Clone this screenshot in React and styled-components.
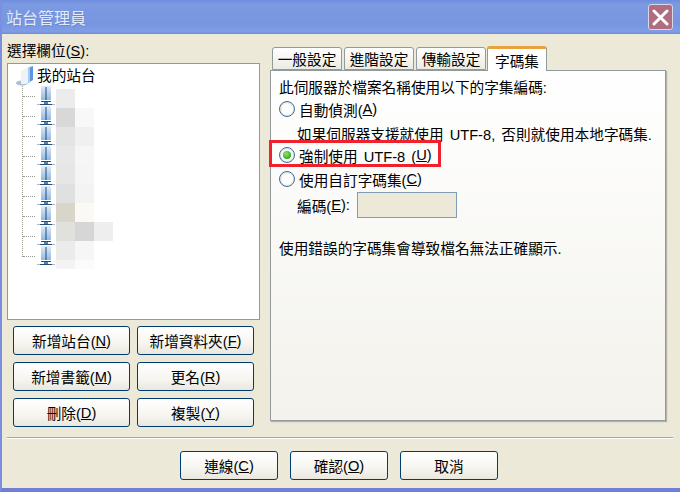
import styled, { createGlobalStyle } from "styled-components";

const Global = createGlobalStyle`
  html, body { margin: 0; padding: 0; background: #ece9d8; }
  body { font-family: "Liberation Sans", "Noto Sans CJK TC", sans-serif; font-size: 14.67px; color: #000; }
  u { text-underline-offset: 1px; }
`;

const Window = styled.div`
  width: 680px;
  height: 492px;
  box-sizing: border-box;
  display: flex;
  flex-direction: column;
  background: #ece9d8;
  border-left: 2px solid #7b8ee0;
  border-bottom: 4px solid #6f7fd6;
  overflow: hidden;
  position: relative;
`;

const TitleBar = styled.div`
  height: 34px;
  margin-left: -2px;
  flex: none;
  display: flex;
  align-items: center;
  justify-content: space-between;
  padding: 0 7px 0 6px;
  background: linear-gradient(#6e8cdc 0, #7c9ae2 12%, #7896e0 70%, #7f9ee6 92%, #6f8bdc 100%);
`;

const TitleText = styled.span`
  color: #e2ebfa;
  font-size: 16px;
  text-shadow: 1px 1px 0 #6a86d2;
`;

const CloseButton = styled.div`
  width: 25px;
  height: 26px;
  box-sizing: border-box;
  border: 1px solid #d8d8e8;
  border-radius: 3px;
  background: #b06c80;
  display: flex;
  align-items: center;
  justify-content: center;
`;

const Main = styled.div`
  display: flex;
  height: 387px;
  flex: none;
  padding-left: 5px;
`;

const LeftColumn = styled.div`
  width: 253px;
  flex: none;
  margin-right: 10px;
`;

const FieldLabel = styled.div`
  height: 29px;
  line-height: 34px;
`;

const Tree = styled.div`
  position: relative;
  box-sizing: border-box;
  height: 257px;
  padding: 1px 0 0 8px;
  background: #fff;
  border: 1px solid #7f9db9;
`;

const RootNode = styled.div`
  display: flex;
  align-items: center;
  gap: 3px;
  height: 21px;
`;

const RootLabel = styled.span`
  margin-bottom: 2px;
`;

const Branches = styled.div`
  position: relative;
  padding-left: 21px;
  &::before {
    content: "";
    position: absolute;
    left: 6px;
    top: 0;
    height: 171px;
    border-left: 1px dotted #9a9a90;
  }
`;

const ServerNode = styled.div`
  height: 20px;
  display: flex;
  align-items: center;
  position: relative;
  &::before {
    content: "";
    position: absolute;
    left: -14px;
    top: 10px;
    width: 12px;
    border-top: 1px dotted #9a9a90;
  }
`;

const Mosaic = styled.div`
  position: absolute;
  left: 48px;
  top: 25px;
`;

const MosaicRow = styled.div`
  display: flex;
  height: ${p => p.$h || 19}px;
`;

const MosaicCell = styled.div`
  width: 19px;
  background: ${p => p.$c};
`;

const ButtonGrid = styled.div`
  display: grid;
  grid-template-columns: 117px 117px;
  grid-auto-rows: 29px;
  gap: 7px;
  padding: 6px 0 0 6px;
`;

const Button = styled.div`
  box-sizing: border-box;
  border: 1px solid #003c74;
  border-radius: 3px;
  background: linear-gradient(#fff 0, #f6f5f0 60%, #e9e7dd 100%);
  display: flex;
  align-items: center;
  justify-content: center;
  width: ${p => p.$w ? `${p.$w}px` : "auto"};
  height: 29px;
`;

const RightColumn = styled.div`
  width: 396px;
  flex: none;
  padding-top: 12px;
`;

const TabStrip = styled.div`
  display: flex;
  align-items: flex-end;
  gap: 2px;
  height: 24px;
  padding-left: 2px;
  position: relative;
  z-index: 1;
`;

const Tab = styled.div`
  box-sizing: border-box;
  height: ${p => p.$active ? 25 : 23}px;
  width: ${p => p.$active ? 60 : 70}px;
  margin-left: ${p => p.$active ? -1 : 0}px;
  margin-bottom: ${p => p.$active ? -1 : 0}px;
  display: flex;
  align-items: center;
  justify-content: center;
  border: 1px solid #919b9c;
  border-bottom: ${p => p.$active ? "none" : "1px solid #919b9c"};
  border-top: ${p => p.$active ? "3px solid #e8a33c" : "1px solid #919b9c"};
  border-radius: 3px 3px 0 0;
  background: ${p => p.$active ? "#fff" : "linear-gradient(#fff, #ecebe2)"};
`;

const Panel = styled.div`
  position: relative;
  box-sizing: border-box;
  height: 351px;
  border: 1px solid #919b9c;
  box-shadow: 1px 1px 1px #b5b3a6;
  background: linear-gradient(#fff, #f3f2ec);
  padding: 4px 0 0 8px;
`;

const Line = styled.div`
  display: flex;
  align-items: center;
  height: 22px;
  white-space: pre;
  word-spacing: 2px;
  margin-top: ${p => p.$gap || 0}px;
  margin-left: ${p => p.$indent || 0}px;
`;

const Radio = styled.span`
  box-sizing: border-box;
  width: 16px;
  height: 16px;
  margin-right: 4px;
  border: 1px solid #3f6f9f;
  border-radius: 50%;
  background: radial-gradient(circle at 60% 60%, #fff 50%, #dcdcd4 100%);
  box-shadow: inset 0 0 0 1px #e4e4dc;
  display: flex;
  align-items: center;
  justify-content: center;
  flex: none;
  &::after {
    content: "";
    display: ${p => p.$checked ? "block" : "none"};
    width: 8px;
    height: 8px;
    border-radius: 50%;
    background: radial-gradient(circle at 40% 35%, #8ee86a, #2aa81c 75%);
  }
`;

const Encoding = styled.span`
  box-sizing: border-box;
  width: 100px;
  height: 26px;
  margin-left: 7px;
  background: #ece9d8;
  border: 1px solid #7f9db9;
`;

const Highlight = styled.div`
  position: absolute;
  left: -2px;
  top: 69px;
  width: 172px;
  height: 27px;
  box-sizing: border-box;
  border: 3px solid #f0202c;
  pointer-events: none;
`;

const Separator = styled.div`
  height: 2px;
  margin: 16px 7px 0 5px;
  background: linear-gradient(#aca899 50%, #fff 50%);
`;

const Footer = styled.div`
  display: flex;
  gap: 12px;
  padding: 12px 0 0 178px;
`;

const ServerIcon = () => (
  <svg width="18" height="20" viewBox="0 0 18 20">
    <defs>
      <linearGradient id="srv" x1="0" y1="0" x2="0" y2="1">
        <stop offset="0" stopColor="#e6ecf4" />
        <stop offset="0.35" stopColor="#c4d8ee" />
        <stop offset="1" stopColor="#8fb8e2" />
      </linearGradient>
    </defs>
    <rect x="4" y="0" width="10" height="14" fill="url(#srv)" />
    <rect x="8.5" y="1" width="1" height="13" fill="#1f4f80" />
    <rect x="4" y="15" width="10" height="1" fill="#1f4f80" />
    <rect x="7" y="16" width="4" height="2" fill="#5583ad" />
    <rect x="0" y="18" width="18" height="1" fill="#b0b8c4" />
    <rect x="3" y="18" width="12" height="1" fill="#1f4f80" />
  </svg>
);

const RootIcon = () => (
  <svg width="18" height="20" viewBox="0 0 18 20">
    <ellipse cx="6" cy="17" rx="6" ry="2.5" fill="#aebdd2" />
    <path d="M5 5 L12 1 L17 0 L17 14 L10 18 L5 18 Z" fill="#eef3fa" />
    <path d="M12 2 L17 0 L17 14 L12 17 Z" fill="#5a98dc" />
    <path d="M12 2 L14 1 L14 16 L12 17 Z" fill="#a8ccf0" />
  </svg>
);

const mosaic = [
  ["#ececec"],
  ["#d8d8d8", "#f8f8f8"],
  ["#e4e4e4", "#f0f0f0"],
  ["#e8e8e8", "#f6f6f6"],
  ["#e6e6e6", "#f5f5f5"],
  ["#e0e0e0", "#f3f3f3"],
  ["#d8d6c9", "#fbf9f4"],
  ["#e0e1dd", "#d6d6d6", "#eeeeee"],
  ["#ebebeb", "#f6f6f6"],
  ["#f3f3f3", "#fbfbfb"],
];

const servers = [0, 1, 2, 3, 4, 5, 6, 7, 8];

const App = () => (
  <Window>
    <Global />
    <TitleBar>
      <TitleText>站台管理員</TitleText>
      <CloseButton>
        <svg width="17" height="17" viewBox="0 0 17 17">
          <path d="M2 2 L15 15 M15 2 L2 15" stroke="#fff" strokeWidth="3" strokeLinecap="round" />
        </svg>
      </CloseButton>
    </TitleBar>
    <Main>
      <LeftColumn>
        <FieldLabel>選擇欄位(<u>S</u>):</FieldLabel>
        <Tree>
          <RootNode>
            <RootIcon />
            <RootLabel>我的站台</RootLabel>
          </RootNode>
          <Branches>
            {servers.map(s => (
              <ServerNode key={s}>
                <ServerIcon />
              </ServerNode>
            ))}
          </Branches>
          <Mosaic>
            {mosaic.map((row, i) => (
              <MosaicRow key={i} $h={i === 9 ? 9 : 19}>
                {row.map((c, j) => <MosaicCell key={j} $c={c} />)}
              </MosaicRow>
            ))}
          </Mosaic>
        </Tree>
        <ButtonGrid>
          <Button>新增站台(<u>N</u>)</Button>
          <Button>新增資料夾(<u>F</u>)</Button>
          <Button>新增書籤(<u>M</u>)</Button>
          <Button>更名(<u>R</u>)</Button>
          <Button>刪除(<u>D</u>)</Button>
          <Button>複製(<u>Y</u>)</Button>
        </ButtonGrid>
      </LeftColumn>
      <RightColumn>
        <TabStrip>
          <Tab>一般設定</Tab>
          <Tab>進階設定</Tab>
          <Tab>傳輸設定</Tab>
          <Tab $active>字碼集</Tab>
        </TabStrip>
        <Panel>
          <Line>此伺服器於檔案名稱使用以下的字集編碼:</Line>
          <Line $gap={1}><Radio />自動偵測(<u>A</u>)</Line>
          <Line $gap={2} $indent={18}>如果伺服器支援就使用 UTF-8, 否則就使用本地字碼集.</Line>
          <Line><Radio $checked />強制使用 UTF-8 (<u>U</u>)</Line>
          <Line $gap={2}><Radio />使用自訂字碼集(<u>C</u>)</Line>
          <Line $gap={4} $indent={18}>編碼(<u>E</u>):<Encoding /></Line>
          <Line $gap={20}>使用錯誤的字碼集會導致檔名無法正確顯示.</Line>
          <Highlight />
        </Panel>
      </RightColumn>
    </Main>
    <Separator />
    <Footer>
      <Button $w={98}>連線(<u>C</u>)</Button>
      <Button $w={98}>確認(<u>O</u>)</Button>
      <Button $w={98}>取消</Button>
    </Footer>
  </Window>
);

export default App;
